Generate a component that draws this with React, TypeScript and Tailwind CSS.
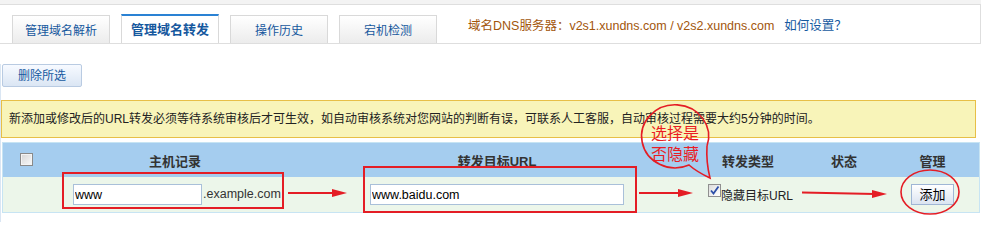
import React from "react";

const tabs = [
  { label: "管理域名解析", active: false },
  { label: "管理域名转发", active: true },
  { label: "操作历史", active: false },
  { label: "宕机检测", active: false },
];

const red = "#e41d25";

function Arrow({ x1, x2, y1, y2 }: { x1: number; x2: number; y1: number; y2: number }) {
  return (
    <g>
      <line x1={x1} y1={y1} x2={x2 - 12} y2={y2} stroke={red} strokeWidth={2} />
      <polygon points={`${x2 - 15},${y2 - 4} ${x2},${y2} ${x2 - 15},${y2 + 4}`} fill={red} />
    </g>
  );
}

function Annotations() {
  // speech bubble ellipse: center (675.5,135.5) rx 33.5 ry 31.5
  const bubble = "M707,146 A33.5,31.5 0 1 0 689,165 Q697,172 710,178 Q706,162 707,146";
  return (
    <svg
      className="absolute left-0 top-0 pointer-events-none"
      width={981}
      height={222}
      viewBox="0 0 981 222"
    >
      <rect x={63} y={173} width={220} height={35} fill="none" stroke={red} strokeWidth={2} />
      <rect x={364} y={167} width={272} height={45} fill="none" stroke={red} strokeWidth={2} />
      <Arrow x1={288} x2={347} y1={193} y2={193} />
      <Arrow x1={639} x2={693} y1={193} y2={193} />
      <Arrow x1={802} x2={887} y1={192.5} y2={194} />
      <ellipse cx={930} cy={192} rx={29} ry={22} fill="none" stroke={red} strokeWidth={1.6} />
      <path d={bubble} fill="none" stroke={red} strokeWidth={1.6} />
    </svg>
  );
}

function CheckedBox() {
  return (
    <span className="inline-flex w-[13px] h-[13px] border border-[#8f8f8f] bg-gradient-to-br from-[#dcdcdc] to-[#ffffff] items-center justify-center">
      <svg width="11" height="11" viewBox="0 0 11 11">
        <path d="M2 5.5 L4.5 8.5 L9.5 1.5" fill="none" stroke="#2c4fa8" strokeWidth="1.8" />
      </svg>
    </span>
  );
}

export default function App() {
  return (
    <div className="relative w-[981px] h-[222px] overflow-hidden bg-white font-['Liberation_Sans','Noto_Sans_CJK_SC',sans-serif] text-[12px] text-[#222]">
      {/* top strip + tab bar */}
      <div className="h-[4px] bg-[#f3f3f3]" />
      <div className="h-[40px] w-[981px] border-t border-b border-r border-[#dedede] flex pl-[12px]">
        <div className="flex items-end gap-[11px] self-end">
          {tabs.map((t) => (
            <div
              key={t.label}
              className={
                t.active
                  ? "w-[98px] h-[29px] border border-b-0 border-[#d9d9d9] border-t-2 border-t-[#2a82d4] bg-white flex items-center justify-center pt-[1px] text-[13px] font-bold text-[#16589e]"
                  : "w-[98px] h-[28px] border border-b-0 border-[#d9d9d9] bg-gradient-to-b from-white to-[#ececec] flex items-center justify-center pt-[2px] text-[12px] text-[#16589e]"
              }
            >
              {t.label}
            </div>
          ))}
        </div>
        <div className="self-start mt-[13px] ml-[31px] leading-[16px] flex">
          <span className="text-[#a2560c] text-[12.5px]">域名DNS服务器：v2s1.xundns.com / v2s2.xundns.com</span>
          <span className="ml-[10px] text-[#15599f] text-[12.5px]">如何设置？</span>
        </div>
      </div>

      {/* content */}
      <div className="border-l border-[#dae6f3] h-[178px]">
        <button className="mt-[20px] ml-[1px] w-[80px] h-[23px] border border-[#b9cbe2] rounded-[2px] bg-gradient-to-b from-[#f7faff] to-[#dbe6f4] text-[12px] text-[#15599f] flex items-center justify-center">
          删除所选
        </button>

        <div className="mt-[13px] w-[975px] h-[38px] border border-[#e7bf47] bg-[#f8f4b9] flex items-center pl-[7px] text-[12px] leading-[16px] text-[#222]">
          新添加或修改后的URL转发必须等待系统审核后才可生效，如自动审核系统对您网站的判断有误，可联系人工客服，自动审核过程需要大约5分钟的时间。
        </div>

        <div className="mt-[4px] ml-[1px] w-[978px] border border-[#c7e4f3]">
          <div className="grid grid-cols-[47px_250px_394px_108px_84px_1fr] h-[34px] bg-[#a5cdef] text-[13px] font-bold text-[#333]">
            <div className="flex items-center justify-center pb-[2px]">
              <span className="w-[13px] h-[13px] border border-[#8a8a8a] bg-gradient-to-br from-[#d6d6d6] to-[#fafafa] shadow-[inset_0_0_0_1px_#f4f4f4]" />
            </div>
            <div className="flex items-center justify-center pt-[3px]">主机记录</div>
            <div className="flex items-center justify-center pt-[3px]">转发目标URL</div>
            <div className="flex items-center justify-center pt-[3px]">转发类型</div>
            <div className="flex items-center justify-center pt-[3px]">状态</div>
            <div className="flex items-center justify-center pt-[3px]">管理</div>
          </div>
          <div className="grid grid-cols-[47px_250px_394px_108px_84px_1fr] h-[35px] bg-[#ecf6ea] items-center">
            <div />
            <div className="flex items-center pl-[23px]">
              <input
                readOnly
                value="www"
                className="w-[129px] h-[21px] border border-[#a9c0d9] bg-white px-[1px] text-[12.5px] text-black outline-none"
              />
              <span className="ml-[1px] text-[12.5px] text-[#333]">.example.com</span>
            </div>
            <div className="flex items-center pl-[70px]">
              <input
                readOnly
                value="www.baidu.com"
                className="w-[254px] h-[21px] border border-[#a9c0d9] bg-white px-[1px] text-[12.5px] text-black outline-none"
              />
            </div>
            <div className="flex items-center pl-[14px]">
              <span className="mb-[5px]">
                <CheckedBox />
              </span>
              <span className="text-[12px] text-[#222] pt-[3px]">隐藏目标URL</span>
            </div>
            <div />
            <div className="flex items-center justify-center">
              <button className="w-[43px] h-[21px] border border-[#9fb6d5] bg-gradient-to-b from-white to-[#dbe4f1] text-[13px] text-black flex items-center justify-center">
                添加
              </button>
            </div>
          </div>
        </div>
      </div>

      <Annotations />
      <div className="absolute left-[651px] top-[126px] flex flex-col gap-[5px] text-[16px] leading-[16px] text-[#ea1c24] pointer-events-none">
        <div>选择是</div>
        <div>否隐藏</div>
      </div>
    </div>
  );
}
